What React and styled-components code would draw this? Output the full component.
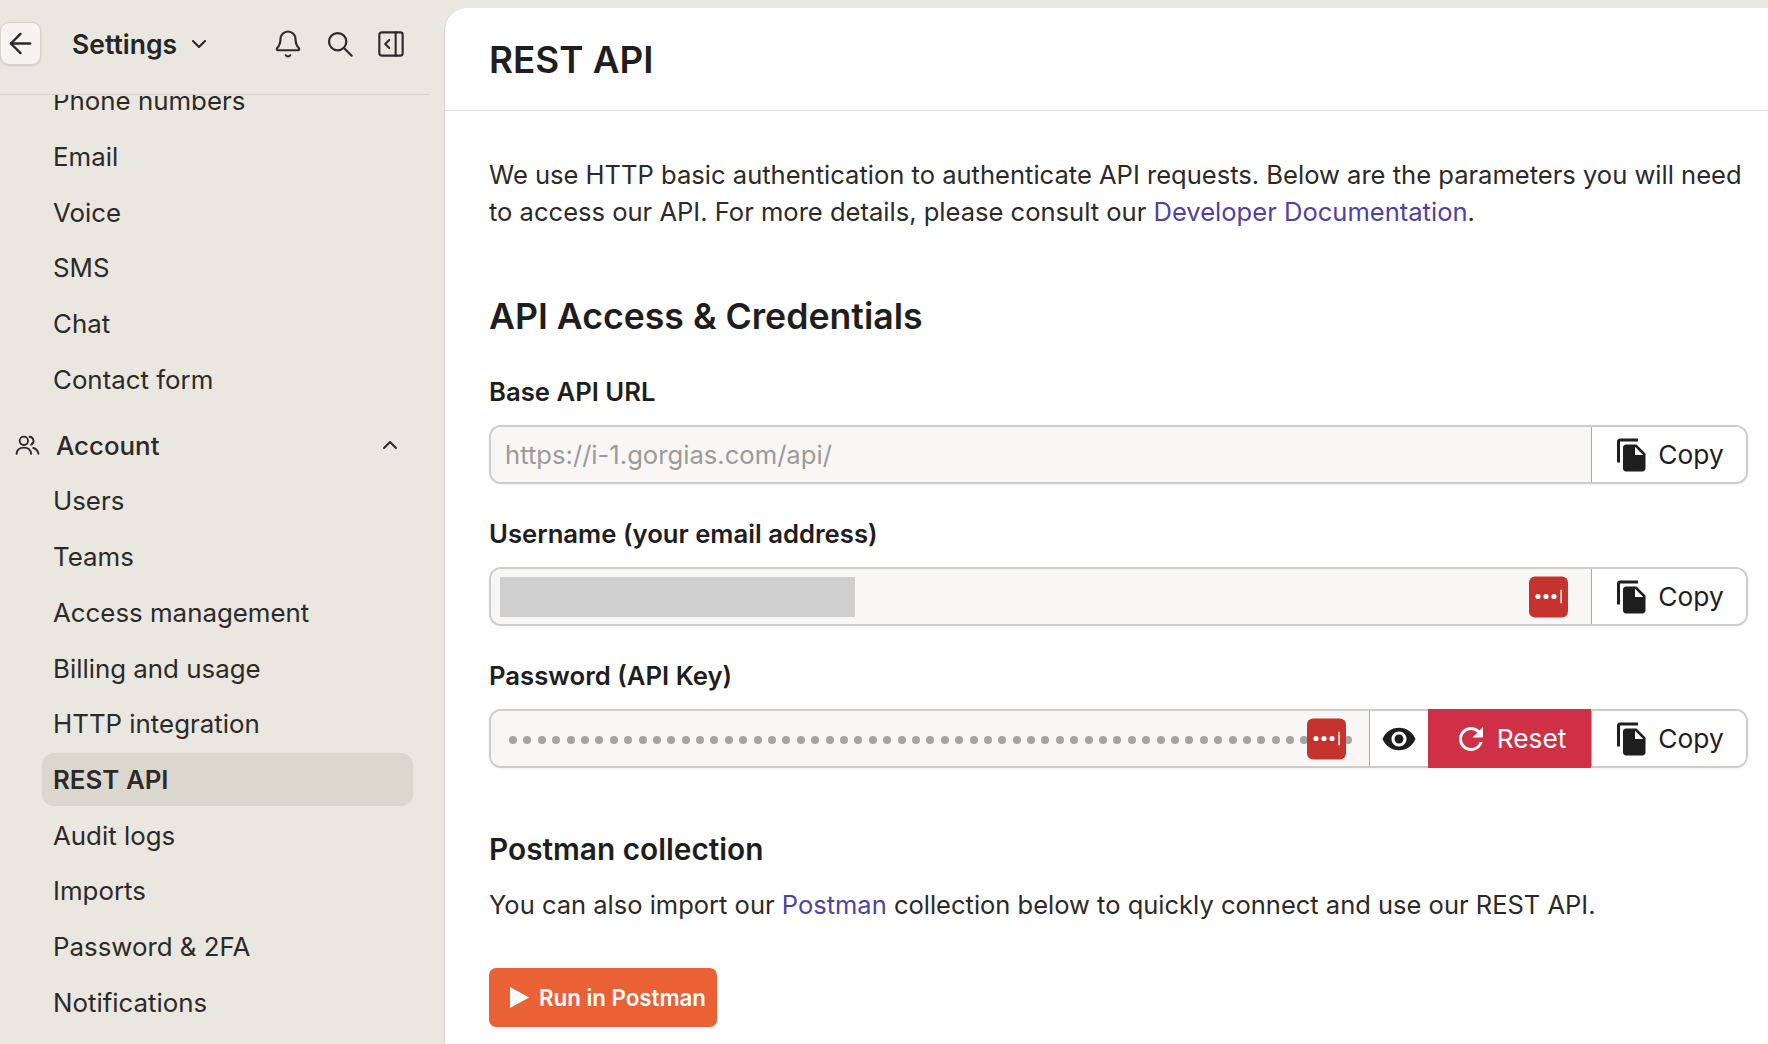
import styled, { createGlobalStyle } from 'styled-components';
import { ArrowLeft, ChevronDown, ChevronUp, Bell } from 'lucide-react';
import { MdFileCopy, MdVisibility, MdRefresh } from 'react-icons/md';

const GlobalStyle = createGlobalStyle`
  html, body {
    margin: 0;
    height: 100%;
    overflow: hidden;
    background: #eae6e0;
    font-family: Inter, "Liberation Sans", sans-serif;
    color: #2b2a28;
  }
`;

const channelItems = ['Phone numbers', 'Email', 'Voice', 'SMS', 'Chat', 'Contact form'];
const accountItems = [
  'Users',
  'Teams',
  'Access management',
  'Billing and usage',
  'HTTP integration',
  'REST API',
  'Audit logs',
  'Imports',
  'Password & 2FA',
  'Notifications',
];

function SearchIcon() {
  return (
    <svg width="28" height="28" viewBox="0 0 24 24" fill="none" stroke="currentColor" strokeWidth="1.9" strokeLinecap="round">
      <circle cx="10" cy="10" r="7.4" />
      <path d="M15.6 15.6 22 22" />
    </svg>
  );
}

function CollapseIcon() {
  return (
    <svg width="28" height="28" viewBox="0 0 24 24" fill="none" stroke="currentColor" strokeWidth="1.8" strokeLinecap="round" strokeLinejoin="round">
      <rect x="2" y="2" width="20" height="20" rx="2" />
      <path d="M16 2v20" />
      <path d="M10.5 8.5 7 12l3.5 3.5" />
    </svg>
  );
}

function AccountIcon() {
  return (
    <svg width="25" height="25" viewBox="0 0 24 24" fill="none" stroke="currentColor" strokeWidth="1.8" strokeLinecap="round">
      <circle cx="8.5" cy="7.5" r="4" />
      <path d="M14 3.6a4 4 0 0 1 1.5 7.6" />
      <path d="M1.5 20c.4-4 3.2-6 7-6s6.6 2 7 6" />
      <path d="M17.5 14.4c2.6.6 4.5 2.6 5 5.6" />
    </svg>
  );
}

function ManagerBadge() {
  return (
    <Badge>
      <svg width="30" height="14" viewBox="0 0 30 14" fill="#fff">
        <circle cx="4" cy="7" r="2.6" />
        <circle cx="12" cy="7" r="2.6" />
        <circle cx="20" cy="7" r="2.6" />
        <rect x="26.4" y="0" width="1.5" height="14" />
      </svg>
    </Badge>
  );
}

function CopyButton() {
  return (
    <GroupButton>
      <MdFileCopy size={36} />
      Copy
    </GroupButton>
  );
}

export default function App() {
  return (
    <Page>
      <GlobalStyle />
      <Sidebar>
        <SidebarHeader>
          <BackButton>
            <ArrowLeft size={33} strokeWidth={1.7} />
          </BackButton>
          <SidebarTitle>
            Settings
            <ChevronDown size={24} strokeWidth={2} />
          </SidebarTitle>
          <HeaderIcons>
            <Bell size={30} strokeWidth={1.7} />
            <SearchIcon />
            <CollapseIcon />
          </HeaderIcons>
        </SidebarHeader>
        <NavScroll>
          <NavList>
            {channelItems.map((item) => (
              <NavItem key={item}>{item}</NavItem>
            ))}
            <NavGroup>
              <AccountIcon />
              <span>Account</span>
              <ChevronUp size={24} strokeWidth={2} />
            </NavGroup>
            {accountItems.map((item) => (
              <NavItem key={item} $active={item === 'REST API'}>
                {item}
              </NavItem>
            ))}
          </NavList>
        </NavScroll>
      </Sidebar>

      <Main>
        <TitleBar>
          <PageTitle>REST API</PageTitle>
        </TitleBar>
        <Content>
          <Paragraph>
            We use HTTP basic authentication to authenticate API requests. Below are the parameters you will need to
            access our API. For more details, please consult our <Link>Developer Documentation</Link>.
          </Paragraph>

          <SectionTitle>API Access &amp; Credentials</SectionTitle>

          <Fields>
            <Field>
              <Label>Base API URL</Label>
              <InputGroup>
                <InputBox>
                  <Placeholder>https://i-1.gorgias.com/api/</Placeholder>
                </InputBox>
                <CopyButton />
              </InputGroup>
            </Field>

            <Field>
              <Label>Username (your email address)</Label>
              <InputGroup>
                <InputBox>
                  <Redacted />
                  <ManagerBadge />
                </InputBox>
                <CopyButton />
              </InputGroup>
            </Field>

            <Field>
              <Label>Password (API Key)</Label>
              <InputGroup>
                <InputBox>
                  <Dots>
                    {Array.from({ length: 59 }, (_, i) => (
                      <Dot key={i} />
                    ))}
                  </Dots>
                  <ManagerBadge />
                </InputBox>
                <EyeButton>
                  <MdVisibility size={36} />
                </EyeButton>
                <ResetButton>
                  <MdRefresh size={36} />
                  Reset
                </ResetButton>
                <CopyButton />
              </InputGroup>
            </Field>
          </Fields>

          <SubTitle>Postman collection</SubTitle>
          <PostmanText>
            You can also import our <Link>Postman</Link> collection below to quickly connect and use our REST API.
          </PostmanText>
          <PostmanButton>
            <svg width="21" height="23" viewBox="0 0 21 23" fill="#fff">
              <path d="M1 1l19 10.5L1 22z" />
            </svg>
            Run in Postman
          </PostmanButton>
        </Content>
      </Main>
    </Page>
  );
}

const Page = styled.div`
  display: flex;
  height: 1044px;
  width: 1768px;
  overflow: hidden;
`;

const Sidebar = styled.aside`
  flex: 0 0 444px;
  display: flex;
  flex-direction: column;
  min-height: 0;
  background: #eae6e0;
`;

const SidebarHeader = styled.header`
  flex: 0 0 95px;
  box-sizing: border-box;
  width: 430px;
  display: flex;
  align-items: flex-start;
  padding-top: 22px;
  border-bottom: 1px solid #d9d5ce;
`;

const BackButton = styled.button`
  width: 41px;
  height: 43px;
  padding: 0;
  display: flex;
  align-items: center;
  justify-content: center;
  color: #2b2a28;
  background: #f6f4f1;
  border: 1px solid #d5d2cb;
  border-radius: 9px;
  box-shadow: 0 1px 2px rgba(0, 0, 0, 0.12);
`;

const SidebarTitle = styled.div`
  display: flex;
  align-items: center;
  gap: 10px;
  height: 43px;
  margin-left: 31px;
  font-size: 26.5px;
  font-weight: 600;
  color: #262523;
`;

const HeaderIcons = styled.div`
  display: flex;
  align-items: center;
  gap: 23px;
  height: 43px;
  margin-left: auto;
  margin-right: 25px;
  color: #2b2a28;
`;

const NavScroll = styled.nav`
  flex: 1;
  min-height: 0;
  overflow: hidden;
`;

const NavList = styled.div`
  display: flex;
  flex-direction: column;
  margin-top: -22px;
`;

const NavItem = styled.div`
  box-sizing: border-box;
  height: 52px;
  margin: 1.85px 31px 1.85px 42px;
  padding-left: 11px;
  display: flex;
  align-items: center;
  font-size: 25.85px;
  font-weight: ${(p) => (p.$active ? 600 : 400)};
  border-radius: 12px;
  background: ${(p) => (p.$active ? '#dbd7cf' : 'transparent')};
  box-shadow: ${(p) => (p.$active ? '0 1px 1px rgba(0,0,0,0.08)' : 'none')};
`;

const NavGroup = styled.div`
  height: 56px;
  margin-top: 10px;
  padding: 0 42px 0 15px;
  display: flex;
  align-items: center;
  gap: 16px;
  font-size: 25.85px;
  font-weight: 500;

  span {
    flex: 1;
  }
`;

const Main = styled.main`
  flex: 1;
  margin-top: 8px;
  background: #fff;
  border-left: 1px solid #d8d5cf;
  border-top-left-radius: 22px;
  overflow: hidden;
`;

const TitleBar = styled.div`
  height: 103px;
  box-sizing: border-box;
  padding-left: 44px;
  display: flex;
  align-items: center;
  border-bottom: 1px solid #e4e4e2;
`;

const PageTitle = styled.h1`
  margin: 0;
  font-size: 36.8px;
  font-weight: 600;
  color: #1e1e1e;
`;

const Content = styled.div`
  padding: 45px 20px 0 44px;
`;

const Paragraph = styled.p`
  margin: 0;
  font-size: 25.55px;
  line-height: 37px;
`;

const Link = styled.a`
  color: #4f3fa6;
`;

const SectionTitle = styled.h2`
  margin: 64px 0 39px;
  font-size: 35.65px;
  line-height: 44px;
  font-weight: 600;
  color: #1e1e1e;
`;

const Fields = styled.div`
  display: flex;
  flex-direction: column;
  gap: 35px;
`;

const Field = styled.div`
  display: flex;
  flex-direction: column;
  gap: 18px;
`;

const Label = styled.label`
  font-size: 25.7px;
  line-height: 30px;
  font-weight: 600;
  color: #1e1e1e;
`;

const InputGroup = styled.div`
  display: flex;
  height: 59px;
  box-sizing: border-box;
  border: 2px solid #cdcdcb;
  border-radius: 12px;
  box-shadow: 0 1px 3px rgba(0, 0, 0, 0.06);
`;

const InputBox = styled.div`
  flex: 1;
  position: relative;
  display: flex;
  align-items: center;
  padding-left: 14px;
  border-radius: 10px 0 0 10px;
  background: #f8f7f5;
`;

const Placeholder = styled.span`
  font-size: 25.63px;
  color: #9b9b99;
`;

const Redacted = styled.div`
  width: 355px;
  height: 40px;
  margin-left: -5px;
  background: #cfcfcf;
`;

const Dots = styled.div`
  display: flex;
  gap: 6.4px;
  margin: 3px 0 0 4px;
`;

const Dot = styled.span`
  flex: 0 0 8px;
  height: 8px;
  border-radius: 50%;
  background: #a4a4a2;
`;

const Badge = styled.div`
  position: absolute;
  right: 23px;
  top: 50%;
  transform: translateY(-50%);
  width: 39px;
  height: 41px;
  display: flex;
  align-items: center;
  justify-content: center;
  background: #c5332f;
  border-radius: 6px;
`;

const GroupButton = styled.button`
  flex: 0 0 155px;
  display: flex;
  align-items: center;
  justify-content: center;
  gap: 8px;
  padding: 0;
  font: inherit;
  font-size: 26.3px;
  color: #1e1e1e;
  background: #fff;
  border: 0;
  border-left: 1px solid #aaaaa8;

  &:last-child {
    border-radius: 0 10px 10px 0;
  }
`;

const EyeButton = styled(GroupButton)`
  flex-basis: 59px;
`;

const ResetButton = styled(GroupButton)`
  flex-basis: 163px;
  margin: -2px 0;
  color: #fff;
  background: #cf3045;
  border-left: 0;
`;

const SubTitle = styled.h3`
  margin: 63px 0 19px;
  font-size: 29.8px;
  line-height: 36px;
  font-weight: 600;
  color: #1e1e1e;
`;

const PostmanText = styled.p`
  margin: 0 0 45px;
  font-size: 25.5px;
  line-height: 37px;
`;

const PostmanButton = styled.button`
  width: 228px;
  height: 59px;
  display: flex;
  align-items: center;
  gap: 9px;
  padding: 0 0 0 20px;
  font: inherit;
  font-size: 22.3px;
  font-weight: 600;
  color: #fff;
  background: #ea6136;
  border: 0;
  border-radius: 7px;
`;
